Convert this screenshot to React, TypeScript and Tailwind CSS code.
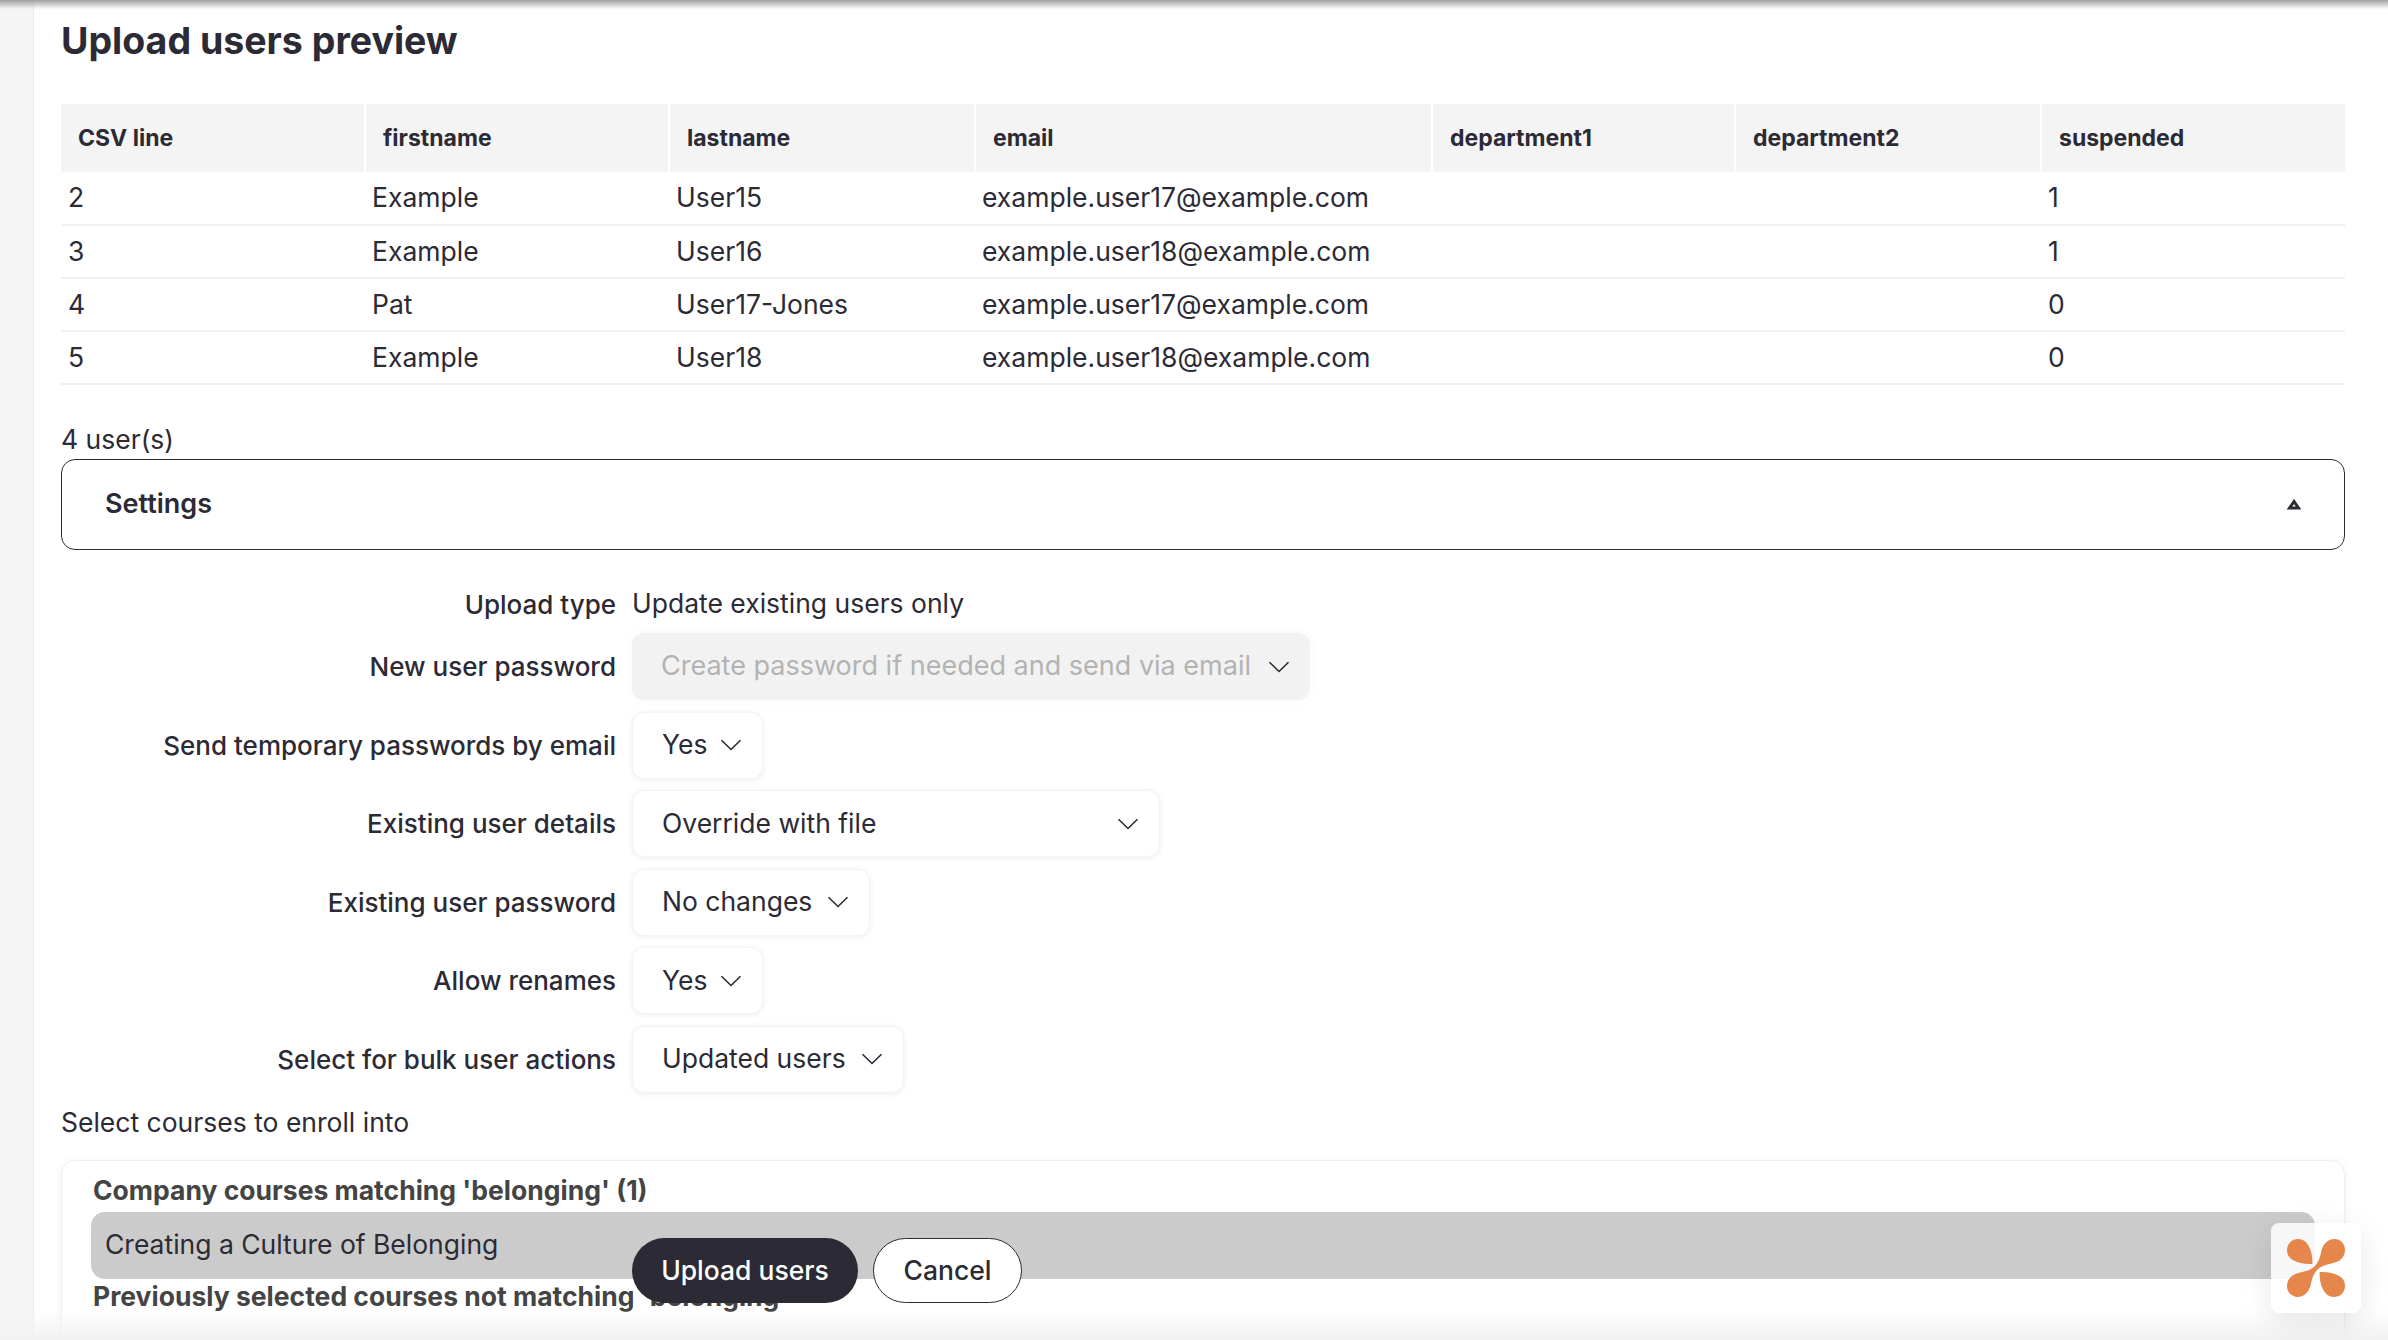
const ink = 'text-[#2b2a35]';

const Chevron = () => (
  <svg width="22" height="12" viewBox="0 0 22 12" fill="none" stroke="#2b2a35" strokeWidth="1.6" className="shrink-0">
    <path d="M1.5 1.2 11 10.5 20.5 1.2" />
  </svg>
);

const Logo = () => (
  <svg width="58" height="58" viewBox="0 0 174 174" fill="#e5874a">
    <path d="M76 75C50 76 0 70 0 34 0 14 14 0 34 0 66 0 78 45 76 75Z" />
    <path d="M98 99C124 98 174 104 174 140 174 160 160 174 140 174 108 174 96 129 98 99Z" />
    <path d="M174 32C174 14 160 0 142 0 122 0 108 16 103 36 98 60 92 78 72 90 60 97 40 100 28 104 10 110 0 124 0 142 0 160 14 174 32 174 52 174 66 158 71 138 76 114 82 96 102 84 114 77 134 74 146 70 164 64 174 50 174 32Z" />
  </svg>
);

const columns = [
  { name: 'CSV line', w: 'w-[304px]' },
  { name: 'firstname', w: 'w-[304px]' },
  { name: 'lastname', w: 'w-[306px]' },
  { name: 'email', w: 'w-[457px]' },
  { name: 'department1', w: 'w-[303px]' },
  { name: 'department2', w: 'w-[306px]' },
  { name: 'suspended', w: 'w-[304px]' },
];

const rows = [
  ['2', 'Example', 'User15', 'example.user17@example.com', '', '', '1'],
  ['3', 'Example', 'User16', 'example.user18@example.com', '', '', '1'],
  ['4', 'Pat', 'User17-Jones', 'example.user17@example.com', '', '', '0'],
  ['5', 'Example', 'User18', 'example.user18@example.com', '', '', '0'],
];

const settings = [
  { label: 'New user password', value: 'Create password if needed and send via email', w: 'w-[678px]', disabled: true },
  { label: 'Send temporary passwords by email', value: 'Yes', w: 'w-[131px]' },
  { label: 'Existing user details', value: 'Override with file', w: 'w-[528px]' },
  { label: 'Existing user password', value: 'No changes', w: 'w-[238px]' },
  { label: 'Allow renames', value: 'Yes', w: 'w-[131px]' },
  { label: 'Select for bulk user actions', value: 'Updated users', w: 'w-[272px]' },
];

export default function App() {
  return (
    <div className={`relative flex h-[1340px] overflow-hidden bg-white font-['Inter',sans-serif] text-[26.5px] ${ink}`}>
      {/* sidebar strip + top bar shadow */}
      <div className="w-[34px] shrink-0 border-r border-[#ececec] bg-[#f5f5f5]" />
      <div className="absolute inset-x-0 top-0 h-[9px] bg-gradient-to-b from-[#a0a0a0] to-white/0" />

      <main className="ml-[27px] w-[2284px] shrink-0">
        <h1 className="pt-[18px] text-[37.5px] leading-[46px] font-bold">Upload users preview</h1>

        <table className="mt-[40px] table-fixed border-collapse text-left">
          <thead>
            <tr>
              {columns.map((c) => (
                <th key={c.name} className={`${c.w} h-[68px] border-l-2 border-white bg-[#f4f4f4] pl-[17px] text-[23px] font-bold first:border-l-0`}>
                  {c.name}
                </th>
              ))}
            </tr>
          </thead>
          <tbody>
            {rows.map((r) => (
              <tr key={r[0]} className="h-[53px] border-b-2 border-[#f0f0f0]">
                {r.map((v, i) => (
                  <td key={i} className="pl-[7px]">{v}</td>
                ))}
              </tr>
            ))}
          </tbody>
        </table>

        <p className="mt-[36px] mb-[2px] leading-[36px]">4 user(s)</p>

        <div className="flex h-[91px] items-center justify-between rounded-[14px] border-[1.5px] border-[#2b2a35] pl-[43px] pr-[43px]">
          <span className="text-[27px] font-semibold">Settings</span>
          <svg width="14" height="11" viewBox="0 0 14 11" fill="none" stroke="#2b2a35" strokeWidth="3">
            <path d="M7 2.5 2.5 9h9Z" />
          </svg>
        </div>

        <div className="mt-[34px] flex h-[40px] items-center gap-[16px]">
          <span className="w-[555px] text-right text-[26px] font-medium">Upload type</span>
          <span>Update existing users only</span>
        </div>

        <div className="mt-[9px] flex flex-col gap-[11.5px]">
          {settings.map((s) => (
            <div key={s.label} className="flex items-center gap-[16px]">
              <span className="w-[555px] text-right text-[26px] font-medium">{s.label}</span>
              <div
                className={`${s.w} flex h-[67px] items-center justify-between rounded-[12px] pl-[29px] pr-[20px] ${
                  s.disabled ? 'bg-[#f2f2f2] text-[27px] text-[#b3b3b3] shadow-[0_0_14px_rgba(0,0,0,0.03)]' : 'border border-[#f4f4f4] bg-white shadow-[0_1px_6px_rgba(0,0,0,0.07)]'
                }`}
              >
                <span>{s.value}</span>
                <Chevron />
              </div>
            </div>
          ))}
        </div>

        <p className="mt-[10px] leading-[38px]">Select courses to enroll into</p>

        <div className="mt-[19px] h-[300px] rounded-[14px] border border-[#efefef] px-[29px] pt-[12px] shadow-[0_0_8px_rgba(0,0,0,0.05)]">
          <p className="pl-[2px] font-bold leading-[34px] text-[#444444]">Company courses matching 'belonging' (1)</p>
          <div className="mt-[5px] flex h-[67px] items-center rounded-[14px] bg-[#cbcbcb] pl-[14px]">Creating a Culture of Belonging</div>
          <p className="pl-[2px] font-bold leading-[34px] text-[#444444]">Previously selected courses not matching 'belonging'</p>
        </div>
      </main>

      {/* page bottom fade */}
      <div className="absolute inset-x-0 bottom-0 h-[30px] bg-gradient-to-b from-white/0 to-[#f2f2f2]" />

      {/* sticky action bar, floats over the course list */}
      <div className="absolute bottom-[37px] left-[632px] flex gap-[15px]">
        <button className="flex h-[65px] w-[226px] items-center justify-center rounded-[33px] bg-[#2b2a35] font-medium text-white">Upload users</button>
        <button className="flex h-[65px] w-[149px] items-center justify-center rounded-[33px] border-[1.5px] border-[#2b2a35] bg-white font-medium">Cancel</button>
      </div>

      {/* floating help widget */}
      <div className="absolute left-[2271px] top-[1223px] flex h-[90px] w-[90px] items-center justify-center rounded-[8px] bg-white/85 shadow-[0_8px_30px_rgba(0,0,0,0.1)]">
        <Logo />
      </div>
    </div>
  );
}
